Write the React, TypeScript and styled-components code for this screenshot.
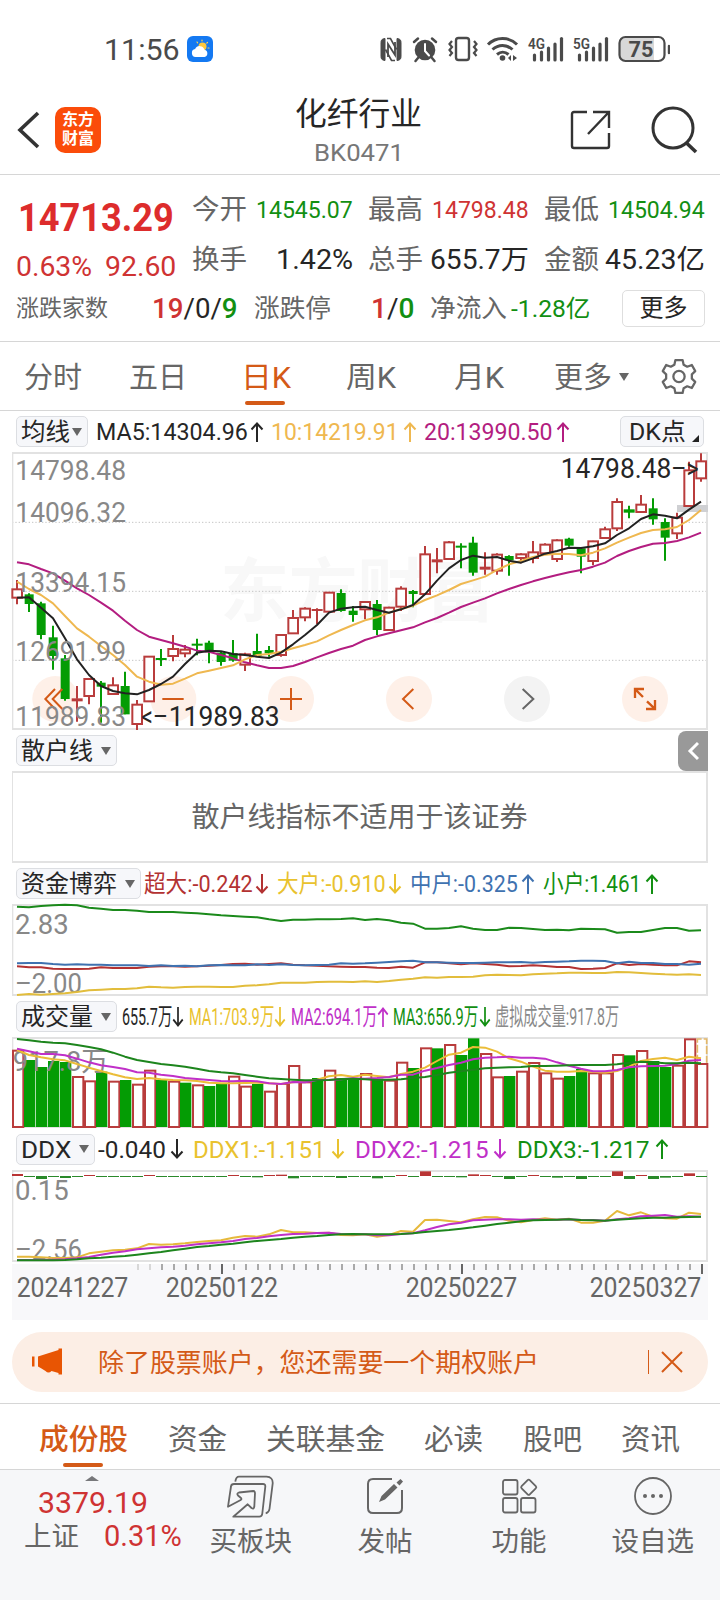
import React, { useLayoutEffect, useRef, useState } from 'react';
import styled, { createGlobalStyle } from 'styled-components';

const GlobalStyle = createGlobalStyle`
  * { box-sizing: border-box; }
  body {
    margin: 0;
    background: #fff;
    font-family: Roboto, "Noto Sans CJK SC", sans-serif;
    color: #2b2b2b;
  }
`;

const RED = '#cf3333';
const GREEN = '#128f12';
const ORANGE = '#d45a17';
const INK = '#262626';
const GREY = '#666';
const GOLD = '#efb850';
const YELLOW = '#e9c22e';
const PURPLE = '#b31d80';
const MAGENTA = '#c030c8';
const BLUE = '#3f72b0';
const CANDLE_RED = '#b93c3c';
const CANDLE_GREEN = '#049c04';

/* ---------- text that is squeezed or stretched to its slot ---------- */

const Slot = styled.span<{ $w: number; $ml: number; $mt: number; $size: number; $color: string; $weight: number }>`
  display: block;
  flex: none;
  width: ${p => p.$w}px;
  margin-left: ${p => p.$ml}px;
  margin-top: ${p => p.$mt}px;
  font-size: ${p => p.$size}px;
  line-height: ${p => Math.round(p.$size * 1.2)}px;
  height: ${p => Math.round(p.$size * 1.2)}px;
  color: ${p => p.$color};
  font-weight: ${p => p.$weight};
  white-space: nowrap;
`;
const SlotInner = styled.span`
  display: inline-block;
  transform-origin: left center;
`;

type FitProps = { w: number; ml?: number; mt?: number; size?: number; color?: string; weight?: number; children: React.ReactNode };

function Fit({ w, ml = 0, mt = 0, size = 24, color = INK, weight = 400, children }: FitProps) {
  const ref = useRef<HTMLSpanElement>(null);
  const [scale, setScale] = useState(1);
  useLayoutEffect(() => {
    if (ref.current && ref.current.offsetWidth) setScale(w / ref.current.offsetWidth);
  }, [w]);
  return (
    <Slot $w={w} $ml={ml} $mt={mt} $size={size} $color={color} $weight={weight}>
      <SlotInner ref={ref} style={{ transform: `translateY(1px) scaleX(${scale})` }}>{children}</SlotInner>
    </Slot>
  );
}

const Tint = styled.span<{ $c: string; $b?: boolean }>`
  color: ${p => p.$c};
  font-weight: ${p => (p.$b ? 500 : 400)};
`;

/* ---------- page frame ---------- */

const Page = styled.div`
  width: 720px;
  height: 1600px;
  overflow: hidden;
  display: flex;
  flex-direction: column;
  background: #fff;
`;

const StatusBar = styled.header`
  height: 86px;
  padding: 12px 50px 0 104px;
  display: flex;
  align-items: center;
  justify-content: space-between;
`;
const StatusGroup = styled.div`
  display: flex;
  align-items: center;
  gap: 7px;
`;

const NavBar = styled.nav`
  height: 89px;
  padding: 0 22px 0 17px;
  border-bottom: 1px solid #d6d6d6;
  display: grid;
  grid-template-columns: 240px 1fr 238px;
`;
const NavSide = styled.div<{ $end?: boolean }>`
  display: flex;
  align-items: center;
  justify-content: ${p => (p.$end ? 'flex-end' : 'flex-start')};
  gap: ${p => (p.$end ? 39 : 15)}px;
`;
const NavTitle = styled.div`
  display: flex;
  flex-direction: column;
  align-items: center;
  padding-top: 9px;
`;
const Brand = styled.div`
  width: 46px;
  height: 46px;
  border-radius: 10px;
  background: #fb4c0a;
  color: #fff;
  font-size: 16px;
  font-weight: 700;
  line-height: 19px;
  text-align: center;
  padding-top: 3px;
`;

const Quote = styled.section`
  height: 167px;
  padding: 19px 15px 0 16px;
  border-bottom: 1px solid #d6d6d6;
`;
const QuoteTop = styled.div`
  display: flex;
`;
const PriceBlock = styled.div`
  width: 176px;
  flex: none;
`;
const ChangeRow = styled.div`
  display: flex;
  margin-top: 9px;
`;
const StatGrid = styled.div`
  flex: 1;
  display: grid;
  grid-template-columns: repeat(3, 161px);
  grid-auto-rows: 50px;
  column-gap: 15px;
  margin-top: -10px;
`;
const Stat = styled.div`
  display: flex;
  align-items: center;
  justify-content: space-between;
`;
const BreadthRow = styled.div`
  display: flex;
  align-items: center;
  height: 38px;
  margin-top: 5px;
`;
const MoreButton = styled.button`
  margin-left: auto;
  width: 83px;
  height: 37px;
  padding: 0;
  border: 1px solid #dedede;
  border-radius: 5px;
  background: #fff;
  color: ${INK};
  font: 24px/34px Roboto, "Noto Sans CJK SC", sans-serif;
`;

const PeriodTabs = styled.div`
  height: 69px;
  border-bottom: 1px solid #d6d6d6;
  display: flex;
  padding-left: 24px;
`;
const Tab = styled.div<{ $w: number; $ml?: number }>`
  width: ${p => p.$w}px;
  margin-left: ${p => p.$ml ?? 0}px;
  display: flex;
  flex-direction: column;
  align-items: center;
  padding-top: 18px;
`;
const Underline = styled.i<{ $mt: number }>`
  display: block;
  width: 40px;
  height: 4px;
  margin: ${p => p.$mt}px 2px 0 0;
  border-radius: 2px;
  background: ${ORANGE};
`;
const Caret = styled.i<{ $c?: string }>`
  display: block;
  width: 0;
  height: 0;
  flex: none;
  border: 5px solid transparent;
  border-top: 8px solid ${p => p.$c ?? GREY};
  border-bottom: 0;
`;
const TabCaret = styled.div`
  margin: 31px 0 0 7px;
`;
const Gear = styled.div`
  margin: 16px 0 0 32px;
`;

const Legend = styled.div<{ $h: number }>`
  height: ${p => p.$h}px;
  display: flex;
  align-items: center;
  padding: 0 16px;
`;
const Chip = styled.div<{ $w: number; $gap?: number }>`
  width: ${p => p.$w}px;
  height: 31px;
  flex: none;
  border: 1px solid #dcdee2;
  border-radius: 5px;
  background: #f6f7fa;
  display: flex;
  align-items: center;
  padding-left: 4px;
  gap: ${p => p.$gap ?? 8}px;
`;
const ArrowSvg = styled.svg<{ $ml: number }>`
  display: block;
  flex: none;
  margin-left: ${p => p.$ml}px;
  fill: none;
  stroke-width: 2;
`;
const DrawerHandle = styled.div`
  margin: 1px -4px 0 auto;
  align-self: flex-start;
  width: 30px;
  height: 40px;
  border-radius: 8px 0 0 8px;
  background: #999;
  display: flex;
  align-items: center;
  justify-content: center;
`;
const DkChip = styled(Chip)`
  margin-left: auto;
  position: relative;
  padding-left: 8px;
`;
const Corner = styled.i`
  position: absolute;
  right: 4px;
  bottom: 4px;
  border-left: 7px solid transparent;
  border-bottom: 7px solid #222;
`;
const Plot = styled.div<{ $h: number }>`
  height: ${p => p.$h}px;
  margin: 0 12px;
  flex: none;
  svg { display: block; width: 696px; height: ${p => p.$h}px; overflow: visible; }
`;
const EmptyPlot = styled.div`
  height: 92px;
  margin: 0 12px;
  border: 2px solid #e2e2e2;
  border-left-width: 1px;
  display: flex;
  align-items: center;
  justify-content: center;
`;
const AxisPlot = styled(Plot)`
  background: #f8f8fa;
  margin-top: 2px;
`;

const Banner = styled.div`
  height: 60px;
  margin: 12px 12px 11px;
  border-radius: 30px;
  background: #fceee5;
  display: flex;
  align-items: center;
  padding: 0 25px 0 19px;
  flex: none;
`;
const BannerDivider = styled.i`
  width: 1px;
  height: 24px;
  margin: 0 12px 0 auto;
  background: ${ORANGE};
`;
const SectionTabs = styled.div`
  height: 67px;
  border-top: 1px solid #d6d6d6;
  border-bottom: 1px solid #d6d6d6;
  display: flex;
  padding-left: 39px;
`;
const BottomBar = styled.footer`
  height: 130px;
  flex: none;
  background: #f6f7f9;
  display: flex;
`;
const IndexBox = styled.div`
  width: 184px;
  padding-top: 6px;
  display: flex;
  flex-direction: column;
  align-items: center;
`;
const IndexCaret = styled.i`
  border: 7px solid transparent;
  border-bottom: 5px solid #77787b;
  border-top: 0;
`;
const IndexRow = styled.div`
  display: flex;
  align-self: flex-start;
  padding-left: 24px;
`;
const Action = styled.div<{ $w: number }>`
  width: ${p => p.$w}px;
  display: flex;
  flex-direction: column;
  align-items: center;
  padding-top: 4px;
  svg { margin-bottom: 4px; }
`;

/* ---------- chart data (three units per pixel, one entry per trading day) ---------- */

type Candle = [number, number, number, number, number];
// [rising, high, body top, body bottom, low]
const candles: Candle[] = [
  [1,510,538,563,583],[0,550,553,582,606],[0,575,580,675,688],[0,647,682,738,779],[0,735,745,867,872],
  [1,828,866,873,935],[1,805,807,858,883],[0,813,818,830,938],[1,802,826,852,852],[0,785,828,913,913],
  [1,870,884,942,960],[1,738,740,874,876],[0,717,745,749,768],[1,675,717,738,754],[1,705,719,730,742],
  [0,686,702,706,736],[0,692,698,727,760],[0,725,728,756,767],[0,690,730,752,755],[1,728,733,764,783],
  [0,671,723,738,740],[0,708,720,730,740],[1,672,675,735,740],[1,600,624,670,672],[1,592,596,622,634],
  [1,595,598,602,642],[1,546,548,605,606],[0,538,549,603,605],[0,588,602,615,635],[1,574,576,598,628],
  [0,570,582,660,675],[1,590,593,660,662],[1,529,536,590,603],[0,540,543,552,592],[1,408,433,552,554],
  [1,414,449,456,490],[1,393,397,447,450],[0,400,408,411,475],[0,380,398,488,497],[1,427,471,478,494],
  [1,430,434,482,494],[0,436,438,451,497],[1,430,433,444,460],[1,393,427,444,460],[1,400,404,430,434],
  [1,388,391,447,456],[0,383,386,407,410],[0,412,415,440,490],[1,392,394,453,466],[1,350,358,384,387],
  [1,265,276,355,363],[0,287,299,307,325],[1,255,284,306,308],[0,265,295,328,344],[0,325,336,383,452],
  [1,308,323,370,387],[1,155,181,288,290],[1,130,154,205,215],
];
const ma5 = [563,562,593,625,685,748,795,828,843,850,853,840,822,800,762,728,722,724,732,735,740,744,728,703,675,645,608,596,592,590,600,608,598,585,553,512,475,450,437,443,441,452,458,445,431,423,413,414,409,400,375,355,327,313,317,325,299,275];
const ma10 = [515,537,555,580,618,655,680,708,735,765,800,815,824,821,806,790,782,774,766,748,735,732,725,715,705,694,676,660,645,631,622,608,597,587,570,556,540,522,511,500,480,463,453,441,434,431,432,436,428,415,398,383,369,360,358,351,330,300];
const ma20 = [457,463,477,490,512,535,555,578,602,632,660,680,690,700,710,722,725,735,745,757,766,774,774,768,756,742,729,717,707,690,679,670,661,652,637,624,608,591,578,565,550,537,525,514,504,495,487,480,470,458,438,423,411,401,399,393,382,368];

const fundSmall = [530,532,528,526,524,526,533,536,540,540,542,546,546,546,548,550,553,556,558,560,562,568,573,569,569,568,568,567,565,570,567,571,578,581,596,596,594,589,596,600,600,593,594,597,600,599,601,596,597,598,608,606,606,600,594,594,602,601];
const fundSuper = [709,712,712,716,717,717,716,712,714,714,714,710,709,709,710,709,707,705,702,701,704,702,700,704,706,707,709,710,711,711,713,714,710,713,697,697,700,703,700,702,704,709,708,706,708,711,711,717,716,714,700,705,702,704,706,706,694,697];
const fundMid = [700,699,699,702,704,703,704,704,706,706,706,708,706,708,707,709,706,705,706,706,703,705,703,705,706,705,704,700,701,700,698,696,694,692,697,697,698,699,699,698,697,697,696,698,696,695,694,692,692,693,700,695,699,699,702,702,704,701];
const fundBig = [795,792,794,792,790,786,781,779,777,777,775,770,772,773,771,770,770,771,771,767,766,763,758,758,758,756,755,755,756,754,756,753,749,746,742,743,741,741,740,736,734,735,736,733,731,730,728,728,729,729,726,727,729,731,733,734,733,735];

const volumeTop = [150,180,201,183,186,229,242,215,243,240,252,210,240,243,248,254,258,250,228,258,252,273,250,196,245,234,210,235,234,220,236,240,186,204,143,145,133,165,115,160,230,228,213,187,218,234,228,207,218,218,163,166,151,183,201,195,116,190];
const volumeRising = '1000011010110101001101111010010110101001101111001110100111'.split('');
const volMa1 = [150,165,172,178,181,192,203,213,223,232,237,234,238,240,241,243,248,250,250,249,248,250,252,247,244,239,229,225,230,224,228,232,222,215,203,183,164,158,141,143,155,175,185,200,212,215,215,213,215,218,213,200,183,177,173,180,170,175];
const volMa2 = [146,154,162,162,166,176,187,196,201,207,217,218,224,228,234,237,240,243,244,242,244,250,252,246,247,240,240,238,235,236,234,231,224,224,212,204,195,188,178,173,172,170,173,173,176,187,197,206,214,214,210,202,199,198,197,192,182,180];
const volMa3 = [117,121,125,128,130,135,141,148,158,170,180,186,192,196,200,206,213,217,220,225,230,235,237,239,241,241,240,237,236,238,240,239,238,234,231,225,218,214,209,205,203,202,201,198,198,197,196,195,195,195,193,188,185,187,190,190,188,190];

const ddxBars = [6,-3,-9,-3,-6,-3,3,-3,-3,-3,-3,3,-3,-3,-3,-3,-3,-3,3,-3,-4,3,4,-7,-3,-3,-3,-6,-3,-3,-7,-3,3,-3,14,-3,-3,-4,5,3,-3,-9,-3,3,-3,-5,-3,-9,-3,-3,14,-9,3,-9,-5,-3,8,-3];
const ddx1 = [770,770,772,774,774,772,760,755,751,749,745,732,734,733,730,726,723,721,713,708,710,703,690,697,697,699,698,705,706,703,710,705,693,695,660,659,663,667,658,651,652,662,667,660,655,659,656,668,668,662,633,646,637,650,655,656,638,642];
const ddx2 = [780,780,780,779,778,775,771,764,758,754,748,745,742,740,737,733,730,727,723,717,714,709,705,702,701,699,698,702,703,703,706,706,702,700,691,681,673,668,661,659,658,658,659,658,659,659,658,660,660,662,658,655,649,647,645,650,649,650];
const ddx3 = [781,781,781,781,780,778,775,773,770,768,764,760,756,751,746,741,738,734,731,727,723,720,717,713,710,708,705,703,702,703,703,703,702,700,696,693,690,686,682,677,672,668,664,661,660,659,658,660,661,662,659,657,655,653,653,652,651,650];

const dayX = (i: number) => 51 + 36 * i;

function Line({ ys, c, w = 6 }: { ys: number[]; c: string; w?: number }) {
  return <polyline points={ys.map((y, i) => `${dayX(i)},${y}`).join(' ')} fill="none" stroke={c} strokeWidth={w} strokeLinejoin="round" />;
}

function Label({ x, y, w, c = '#888', size = 81, children }: { x: number; y: number; w: number; c?: string; size?: number; children: string }) {
  return <text x={x} y={y} textLength={w} lengthAdjust="spacingAndGlyphs" fontSize={size} fill={c}>{children}</text>;
}

function Frame({ top, bottom }: { top: number; bottom: number }) {
  return (
    <g fill="none" stroke="#e2e2e2">
      <path d={`M36 ${top}H2124M36 ${bottom}H2124M2121 ${top}V${bottom}`} strokeWidth={6} />
      <path d={`M38 ${top}V${bottom}`} strokeWidth={4} />
    </g>
  );
}

function PriceChart() {
  return (
    <svg viewBox="36 126 2088 834">
      <text x="660" y="618" fontSize="208" fontWeight="700" textLength="825" fill="#f8f8f8">东方财富</text>
      <path d="M36 337H2124M36 544H2124M36 751H2124" stroke="#c4c4c4" strokeWidth="3" strokeDasharray="4 6" />
      <Frame top={129} bottom={957} />
      {[166, 520, 873, 1227, 1935].map(cx => <circle key={cx} cx={cx} cy="867" r="69" fill="#fef0e8" />)}
      <circle cx="1581" cy="867" r="69" fill="#f3f3f3" />
      <rect x="2031" y="285" width="93" height="21" fill="#cfd0d3" />
      {candles.map(([up, h, t, b, l], i) => {
        const x = dayX(i);
        const c = up ? CANDLE_RED : CANDLE_GREEN;
        const bodyH = b - t;
        return (
          <g key={i} stroke={c} strokeWidth="6" fill={up ? '#fff' : c}>
            <path d={up ? `M${x} ${h}V${t}M${x} ${b}V${l}` : `M${x} ${h}V${l}`} />
            {bodyH < 9
              ? <rect x={x - 16} y={t - 1} width="33" height={Math.max(bodyH + 2, 6)} fill={c} stroke="none" />
              : up
                ? <rect x={x - 14} y={t} width="29" height={bodyH} />
                : <rect x={x - 13} y={t} width="27" height={bodyH} stroke="none" />}
          </g>
        );
      })}
      <Line ys={ma20} c={PURPLE} />
      <Line ys={ma10} c={GOLD} />
      <Line ys={ma5} c="#222" />
      <g fill="none" stroke={ORANGE} strokeWidth="6">
        <path d="M165 837L136 867L165 897M187 837L158 867L187 897" />
        <path d="M487 867H551M840 867H906M873 834V900" />
        <path d="M1240 837L1209 867L1240 897" />
        <path d="M1905 864V837H1932M1906 838L1929 861M1938 897H1965V870M1941 874L1964 896" strokeWidth="7" />
      </g>
      <path d="M1568 837L1600 867L1568 897" fill="none" stroke="#666" strokeWidth="6" />
      <Label x={46} y={209} w={332}>14798.48</Label>
      <Label x={46} y={337} w={332}>14096.32</Label>
      <Label x={46} y={546} w={332}>13394.15</Label>
      <Label x={46} y={753} w={332}>12691.99</Label>
      <Label x={46} y={949} w={332}>11989.83</Label>
      <Label x={1682} y={203} w={332} c={INK}>14798.48</Label>
      <Label x={2014} y={203} w={82} c={INK}>{'–>'}</Label>
      <Label x={424} y={947} w={80} c={INK}>{'<–'}</Label>
      <Label x={506} y={947} w={333} c={INK}>11989.83</Label>
    </svg>
  );
}

function FundChart() {
  return (
    <svg viewBox="36 522 2088 276">
      <Frame top={525} bottom={795} />
      <Label x={45} y={612} w={161}>2.83</Label>
      <Label x={45} y={790} w={201}>–2.00</Label>
      <Line ys={fundSmall} c="#1b8a1b" />
      <Line ys={fundSuper} c="#b33232" />
      <Line ys={fundBig} c="#e2bd3c" />
      <Line ys={fundMid} c={BLUE} />
    </svg>
  );
}

function VolumeChart() {
  return (
    <svg viewBox="36 111 2088 273">
      <Frame top={114} bottom={381} />
      {volumeTop.map((t, i) => {
        const x = dayX(i) - 15;
        return volumeRising[i] === '1'
          ? <rect key={i} x={x + 3} y={t + 2} width="31" height={379 - t} fill="#fff" stroke={CANDLE_RED} strokeWidth="6" />
          : <rect key={i} x={x} y={t} width="34" height={381 - t} fill={CANDLE_GREEN} />;
      })}
      <path d="M2092 188V117H2120V188" fill="none" stroke="#e3b868" strokeWidth="5" strokeDasharray="24 6" />
      <Label x={38} y={214} w={288}>917.8万</Label>
      <Line ys={volMa1} c="#ebbd38" />
      <Line ys={volMa2} c={MAGENTA} />
      <Line ys={volMa3} c="#1d851d" />
    </svg>
  );
}

function DdxChart() {
  return (
    <svg viewBox="36 510 2088 276">
      <Frame top={513} bottom={783} />
      {ddxBars.map((v, i) => (
        <rect key={i} x={dayX(i) - 15} y={528 - Math.max(v, 0)} width="33" height={Math.abs(v)} fill={v > 0 ? '#b93434' : '#2a8a2a'} />
      ))}
      <Label x={45} y={601} w={161}>0.15</Label>
      <Label x={45} y={777} w={201}>–2.56</Label>
      <Line ys={ddx1} c="#e6b93c" />
      <Line ys={ddx2} c={MAGENTA} />
      <Line ys={ddx3} c="#1d851d" />
    </svg>
  );
}

function DateAxis() {
  const ticks = Array.from({ length: 48 }, (_, k) => k + 10);
  return (
    <svg viewBox="36 792 2088 168">
      {ticks.map(i => {
        const major = i === 17 || i === 37 || i === 57;
        return <rect key={i} x={dayX(i)} y="792" width="6" height={major ? 30 : 18} fill={major ? '#666' : i < 12 ? '#d8d8d8' : '#aaa'} />;
      })}
      <Label x={50} y={890} w={335} c={GREY}>20241227</Label>
      <Label x={497} y={890} w={337} c={GREY}>20250122</Label>
      <Label x={1217} y={890} w={335} c={GREY}>20250227</Label>
      <Label x={1769} y={890} w={335} c={GREY}>20250327</Label>
    </svg>
  );
}

/* ---------- icons ---------- */

const WeatherIcon = () => (
  <svg width="26" height="26" viewBox="0 0 26 26">
    <rect width="26" height="26" rx="6" fill="#1479f2" />
    <g stroke="#ffd34e" strokeWidth="1.200" strokeLinecap="round"><path d="M15 4v1M20.500 6.500l-.7.700M10 6l.6.8M22 12h-1" /></g>
    <circle cx="15.500" cy="10.500" r="4" fill="#ffc93c" />
    <path d="M8.500 21a4 4 0 0 1-.4-7.900 5 5 0 0 1 9.400.7A3.700 3.700 0 0 1 17.500 21z" fill="#fff" />
  </svg>
);

const StatusIcons = () => (
  <svg width="292" height="30" viewBox="378 34 292 30" fill="none" stroke="#4a4a4a">
    <path d="M385 38.500c-3 .3-4 1.500-4 4v14c0 2.500 1 3.700 4 4zM397 60.500c3-.3 4-1.500 4-4v-14c0-2.500-1-3.700-4-4z" fill="#4a4a4a" strokeWidth="1" />
    <path d="M387 38.500h3.500l6 11M395 60.500h-3.500l-6-11" strokeWidth="1.600" />
    <path d="M388 57V44l7 11V42" strokeWidth="1.800" />
    <circle cx="425" cy="50" r="10.300" fill="#4a4a4a" stroke="none" />
    <path d="M414 42l4-3.500M436 42l-4-3.500M418 58l-2.500 3M432 58l2.500 3" strokeWidth="2.500" strokeLinecap="round" />
    <path d="M425 44v7l4 4.500" stroke="#fff" strokeWidth="2" strokeLinecap="round" />
    <rect x="456" y="38" width="13" height="22" rx="2.500" strokeWidth="2.400" />
    <path d="M452 41l-2.500 3 2.500 3-2.500 3 2.500 3-2.500 3M474 41l2.500 3-2.500 3 2.500 3-2.500 3 2.500 3" strokeWidth="2.200" />
    <path d="M488 44.500c8-8 21-8 29 0M492.500 49.500c6-5.500 14-5.500 20 0M497 54.500c3.500-3 8-3 11.500 0" strokeWidth="3" />
    <circle cx="502.500" cy="58" r="2.800" fill="#4a4a4a" stroke="none" />
    <path d="M508 58l3-3v6zM513 55v6l4-3z" fill="#4a4a4a" stroke="none" />
    {[534.500, 541.500, 548.500, 555, 561.500].map((x, i) => (
      <path key={x} d={`M${x} 60V${[55, 52, 48, 44, 38.500][i]}`} strokeWidth="3.200" strokeLinecap="round" />
    ))}
    {[579.500, 586.500, 593.500, 600, 606.500].map((x, i) => (
      <path key={x} d={`M${x} 60V${[55, 52, 48, 44, 38.500][i]}`} strokeWidth="3.200" strokeLinecap="round" />
    ))}
    <g fill="#4a4a4a" stroke="none" fontWeight="600" fontSize="15.500">
      <text x="528" y="48.500" textLength="17" lengthAdjust="spacingAndGlyphs">4G</text>
      <text x="573" y="48.500" textLength="17" lengthAdjust="spacingAndGlyphs">5G</text>
    </g>
    <path d="M626 37.500h28v23.500h-28q-6 0-6-6v-11.500q0-6 6-6z" fill="#d8d8d8" stroke="none" />
    <rect x="619.500" y="37" width="45" height="24" rx="6" strokeWidth="2.200" />
    <path d="M669 46v7" strokeWidth="2.400" strokeLinecap="round" />
    <text x="628.500" y="57" fontSize="22" fontWeight="700" fill="#4a4a4a" stroke="none" textLength="25" lengthAdjust="spacingAndGlyphs">75</text>
  </svg>
);

const GearIcon = () => (
  <svg width="36" height="37" viewBox="0 0 34 36" fill="none" stroke="#666" strokeWidth="2.200" strokeLinejoin="round">
    <path d="M13.500 2h7l1 4.500 3.500 2 4.500-1.700 3.300 6-3.300 3.100v4.200l3.300 3.100-3.300 6-4.500-1.700-3.500 2-1 4.500h-7l-1-4.500-3.500-2-4.500 1.700-3.300-6 3.300-3.100v-4.200l-3.300-3.100 3.300-6L9 8.500l3.500-2z" />
    <circle cx="17" cy="18" r="5.500" />
  </svg>
);

const CloseIcon = () => (
  <svg width="22" height="22" viewBox="0 0 22 22" stroke={ORANGE} strokeWidth="2"><path d="M1 1l20 20M21 1L1 21" /></svg>
);

const HornIcon = () => (
  <svg width="32" height="28" viewBox="0 0 32 28" fill="#e85503">
    <path d="M1 8.500h2.500v10H1zM7 8.500L27.500 2V.5H31v26h-3.500V25L20.500 23q-3 3-6 0l-4-2.500L7 18.500z" />
  </svg>
);

/* ---------- legends ---------- */

function Arrow({ up, c, ml = 5, w = 14 }: { up?: boolean; c: string; ml?: number; w?: number }) {
  return (
    <ArrowSvg $ml={ml} width={w} height={20} viewBox="0 0 14 20" preserveAspectRatio="none" stroke={c}>
      <path d={up ? 'M7 20V1.500M1.500 7.500L7 1.500l5.500 6' : 'M7 0v18.500M1.500 12.500L7 18.500l5.500-6'} />
    </ArrowSvg>
  );
}

function Picker({ label, w, tw, gap }: { label: string; w: number; tw: number; gap?: number }) {
  return <Chip $w={w} $gap={gap}><Fit w={tw} size={24}>{label}</Fit><Caret /></Chip>;
}

export default function App() {
  return (
    <Page>
      <GlobalStyle />
      <StatusBar>
        <StatusGroup>
          <Fit w={76} size={30} color="#4a4a4a">11:56</Fit>
          <WeatherIcon />
        </StatusGroup>
        <StatusIcons />
      </StatusBar>

      <NavBar>
        <NavSide>
          <svg width="23" height="38" viewBox="0 0 23 38" fill="none" stroke="#333" strokeWidth="3.600"><path d="M21 2L3 19l18 17" /></svg>
          <Brand>东方<br />财富</Brand>
        </NavSide>
        <NavTitle>
          <Fit w={127} size={31.500} ml={0}>化纤行业</Fit>
          <Fit w={90} size={24} color="#777" mt={5}>BK0471</Fit>
        </NavTitle>
        <NavSide $end>
          <svg width="41" height="40" viewBox="0 0 41 40" fill="none" stroke="#333" strokeWidth="2.400">
            <path d="M17 2H4q-2 0-2 2v32q0 2 2 2h33q2 0 2-2V23M23 2h16v16M39 2L18 24" />
          </svg>
          <svg width="48" height="48" viewBox="0 0 48 48" fill="none" stroke="#333" strokeWidth="3">
            <circle cx="23" cy="22" r="20" /><path d="M36.500 37L46 46" strokeWidth="3.600" />
          </svg>
        </NavSide>
      </NavBar>

      <Quote>
        <QuoteTop>
          <PriceBlock>
            <Fit w={156} ml={2} size={38.500} weight={700} color="#dd2c2c">14713.29</Fit>
            <ChangeRow>
              <Fit w={76} size={28} color={RED}>0.63%</Fit>
              <Fit w={71} ml={13} size={28} color={RED}>92.60</Fit>
            </ChangeRow>
          </PriceBlock>
          <StatGrid>
            <Stat><Fit w={55} size={27} color={GREY}>今开</Fit><Fit w={97} size={24} color={GREEN}>14545.07</Fit></Stat>
            <Stat><Fit w={55} size={27} color={GREY}>最高</Fit><Fit w={97} size={24} color={RED}>14798.48</Fit></Stat>
            <Stat><Fit w={55} size={27} color={GREY}>最低</Fit><Fit w={97} size={24} color={GREEN}>14504.94</Fit></Stat>
            <Stat><Fit w={55} size={27} color={GREY}>换手</Fit><Fit w={77} size={28}>1.42%</Fit></Stat>
            <Stat><Fit w={55} size={27} color={GREY}>总手</Fit><Fit w={99} size={27}>655.7万</Fit></Stat>
            <Stat><Fit w={55} size={27} color={GREY}>金额</Fit><Fit w={100} size={27}>45.23亿</Fit></Stat>
          </StatGrid>
        </QuoteTop>
        <BreadthRow>
          <Fit w={92} size={23} color={GREY}>涨跌家数</Fit>
          <Fit w={86} ml={44} size={28}><Tint $c={RED} $b>19</Tint>/0/<Tint $c={GREEN} $b>9</Tint></Fit>
          <Fit w={77} ml={16} size={25} color={GREY}>涨跌停</Fit>
          <Fit w={43} ml={40} size={28}><Tint $c={RED} $b>1</Tint>/<Tint $c={GREEN} $b>0</Tint></Fit>
          <Fit w={77} ml={16} size={25} color={GREY}>净流入</Fit>
          <Fit w={79} ml={4} size={24} color={GREEN}>-1.28亿</Fit>
          <MoreButton>更多</MoreButton>
        </BreadthRow>
      </Quote>

      <PeriodTabs>
        <Tab $w={58}><Fit w={58} size={29} color={GREY}>分时</Fit></Tab>
        <Tab $w={58} $ml={47}><Fit w={58} size={29} color={GREY}>五日</Fit></Tab>
        <Tab $w={50} $ml={54}><Fit w={50} size={29} color={ORANGE}>日K</Fit><Underline $mt={6} /></Tab>
        <Tab $w={50} $ml={55}><Fit w={50} size={29} color={GREY}>周K</Fit></Tab>
        <Tab $w={50} $ml={58}><Fit w={50} size={29} color={GREY}>月K</Fit></Tab>
        <Tab $w={58} $ml={50}><Fit w={58} size={29} color={GREY}>更多</Fit></Tab>
        <TabCaret><Caret /></TabCaret>
        <Gear><GearIcon /></Gear>
      </PeriodTabs>

      <Legend $h={41}>
        <Picker label="均线" w={72} tw={49} gap={2} />
        <Fit w={152} ml={8} size={24}>MA5:14304.96</Fit>
        <Arrow up c={INK} ml={2} />
        <Fit w={128} ml={7} color={GOLD}>10:14219.91</Fit>
        <Arrow up c={GOLD} ml={4} />
        <Fit w={129} ml={7} color={PURPLE}>20:13990.50</Fit>
        <Arrow up c={PURPLE} ml={3} />
        <DkChip $w={84}><Fit w={57} size={24}>DK点</Fit><Corner /></DkChip>
      </Legend>
      <Plot $h={278}><PriceChart /></Plot>

      <Legend $h={41}>
        <Picker label="散户线" w={101} tw={72} />
        <DrawerHandle>
          <svg width="12" height="20" viewBox="0 0 12 20" fill="none" stroke="#fff" strokeWidth="3"><path d="M11 2L3 10l8 8" /></svg>
        </DrawerHandle>
      </Legend>
      <EmptyPlot><Fit w={336} size={28} color={GREY}>散户线指标不适用于该证券</Fit></EmptyPlot>

      <Legend $h={41}>
        <Picker label="资金博弈" w={125} tw={96} />
        <Fit w={109} ml={3} color="#b33232">超大:-0.242</Fit><Arrow c="#b33232" ml={2} />
        <Fit w={109} ml={8} color={YELLOW}>大户:-0.910</Fit><Arrow c={YELLOW} ml={2} />
        <Fit w={108} ml={8} color={BLUE}>中户:-0.325</Fit><Arrow up c={BLUE} ml={3} />
        <Fit w={98} ml={8} color={GREEN}>小户:1.461</Fit><Arrow up c={GREEN} ml={4} />
      </Legend>
      <Plot $h={92}><FundChart /></Plot>

      <Legend $h={41}>
        <Picker label="成交量" w={101} tw={72} />
        <Fit w={50} ml={5}>655.7万</Fit><Arrow c={INK} ml={0} w={12} />
        <Fit w={85} ml={5} color={YELLOW}>MA1:703.9万</Fit><Arrow c={YELLOW} ml={0} w={12} />
        <Fit w={86} ml={5} color={MAGENTA}>MA2:694.1万</Fit><Arrow up c={MAGENTA} ml={0} w={12} />
        <Fit w={85} ml={4} color={GREEN}>MA3:656.9万</Fit><Arrow c={GREEN} ml={1} w={12} />
        <Fit w={124} ml={4} color="#8a8a8a">虚拟成交量:917.8万</Fit>
      </Legend>
      <Plot $h={91}><VolumeChart /></Plot>

      <Legend $h={42}>
        <Picker label="DDX" w={79} tw={50} />
        <Fit w={68} ml={3}>-0.040</Fit><Arrow c={INK} ml={4} />
        <Fit w={133} ml={9} color={YELLOW}>DDX1:-1.151</Fit><Arrow c={YELLOW} ml={5} />
        <Fit w={134} ml={10} color={MAGENTA}>DDX2:-1.215</Fit><Arrow c={MAGENTA} ml={4} />
        <Fit w={133} ml={10} color={GREEN}>DDX3:-1.217</Fit><Arrow up c={GREEN} ml={5} />
      </Legend>
      <Plot $h={92}><DdxChart /></Plot>
      <AxisPlot $h={56}><DateAxis /></AxisPlot>

      <Banner>
        <HornIcon />
        <Fit w={441} ml={35} size={26} color={ORANGE}>除了股票账户，您还需要一个期权账户</Fit>
        <BannerDivider />
        <CloseIcon />
      </Banner>

      <SectionTabs>
        <Tab $w={89}><Fit w={89} size={29} weight={500} color={ORANGE}>成份股</Fit><Underline $mt={6} /></Tab>
        <Tab $w={59} $ml={40}><Fit w={59} size={29} color={GREY}>资金</Fit></Tab>
        <Tab $w={119} $ml={39}><Fit w={119} size={29} color={GREY}>关联基金</Fit></Tab>
        <Tab $w={59} $ml={39}><Fit w={59} size={29} color={GREY}>必读</Fit></Tab>
        <Tab $w={59} $ml={40}><Fit w={59} size={29} color={GREY}>股吧</Fit></Tab>
        <Tab $w={59} $ml={39}><Fit w={59} size={29} color={GREY}>资讯</Fit></Tab>
      </SectionTabs>

      <BottomBar>
        <IndexBox>
          <IndexCaret />
          <Fit w={110} ml={1} mt={3} size={30} color={RED}>3379.19</Fit>
          <IndexRow>
            <Fit w={55} size={27} color={GREY}>上证</Fit>
            <Fit w={78} ml={25} size={29} color={RED} mt={-2}>0.31%</Fit>
          </IndexRow>
        </IndexBox>
        <Action $w={134}>
          <svg width="48" height="46" viewBox="0 0 48 46" fill="none" stroke="#666" strokeWidth="1.800" strokeLinejoin="round">
            <path d="M8.300 7.700Q9 2.700 12 2.700H39.500Q46 3 45.700 9.300L42.500 35Q42 38.500 38.700 39.300" />
            <path d="M1 32.700L4 12.500Q4.300 10 7 10H36Q38.500 10 38.300 12.700L35.300 39.500Q35 42.700 32.300 42.700H6.300L20.700 30.300L24.500 34Q27 35.500 27.300 32.700L28 19Q28 17 26.300 17L12 18.500Q9.300 19.500 11 21.500L14 24Q15 25.300 13.700 26Z" />
          </svg>
          <Fit w={83} size={27.500} color={GREY}>买板块</Fit>
        </Action>
        <Action $w={134}>
          <svg width="48" height="46" viewBox="0 0 48 46" fill="none" stroke="#666" strokeWidth="2">
            <path d="M31 5H12q-5 0-5 5v24q0 5 5 5h24q5 0 5-5V16" />
            <path d="M18 28l2.500-6L33 10l3.500 3.500L24 25.500zM35.500 8.500l4-3.500 2.500 2.500-3.500 4z" fill="#666" stroke="none" />
          </svg>
          <Fit w={55} size={27.500} color={GREY}>发帖</Fit>
        </Action>
        <Action $w={134}>
          <svg width="48" height="46" viewBox="0 0 48 46" fill="none" stroke="#666" strokeWidth="1.800">
            <rect x="8" y="6" width="14.500" height="14.500" rx="2" /><rect x="8" y="24" width="14.500" height="14.500" rx="2" />
            <rect x="26" y="24" width="14.500" height="14.500" rx="2" />
            <rect x="28" y="7.500" width="11.500" height="11.500" rx="1.500" transform="rotate(45 33.700 13.200)" />
          </svg>
          <Fit w={55} size={27.500} color={GREY}>功能</Fit>
        </Action>
        <Action $w={134}>
          <svg width="48" height="46" viewBox="0 0 48 46" fill="none" stroke="#666" strokeWidth="1.800">
            <circle cx="24" cy="22" r="18" />
            <g fill="#666" stroke="none"><circle cx="16" cy="22" r="2" /><circle cx="24" cy="22" r="2" /><circle cx="32" cy="22" r="2" /></g>
          </svg>
          <Fit w={83} size={27.500} color={GREY}>设自选</Fit>
        </Action>
      </BottomBar>
    </Page>
  );
}
